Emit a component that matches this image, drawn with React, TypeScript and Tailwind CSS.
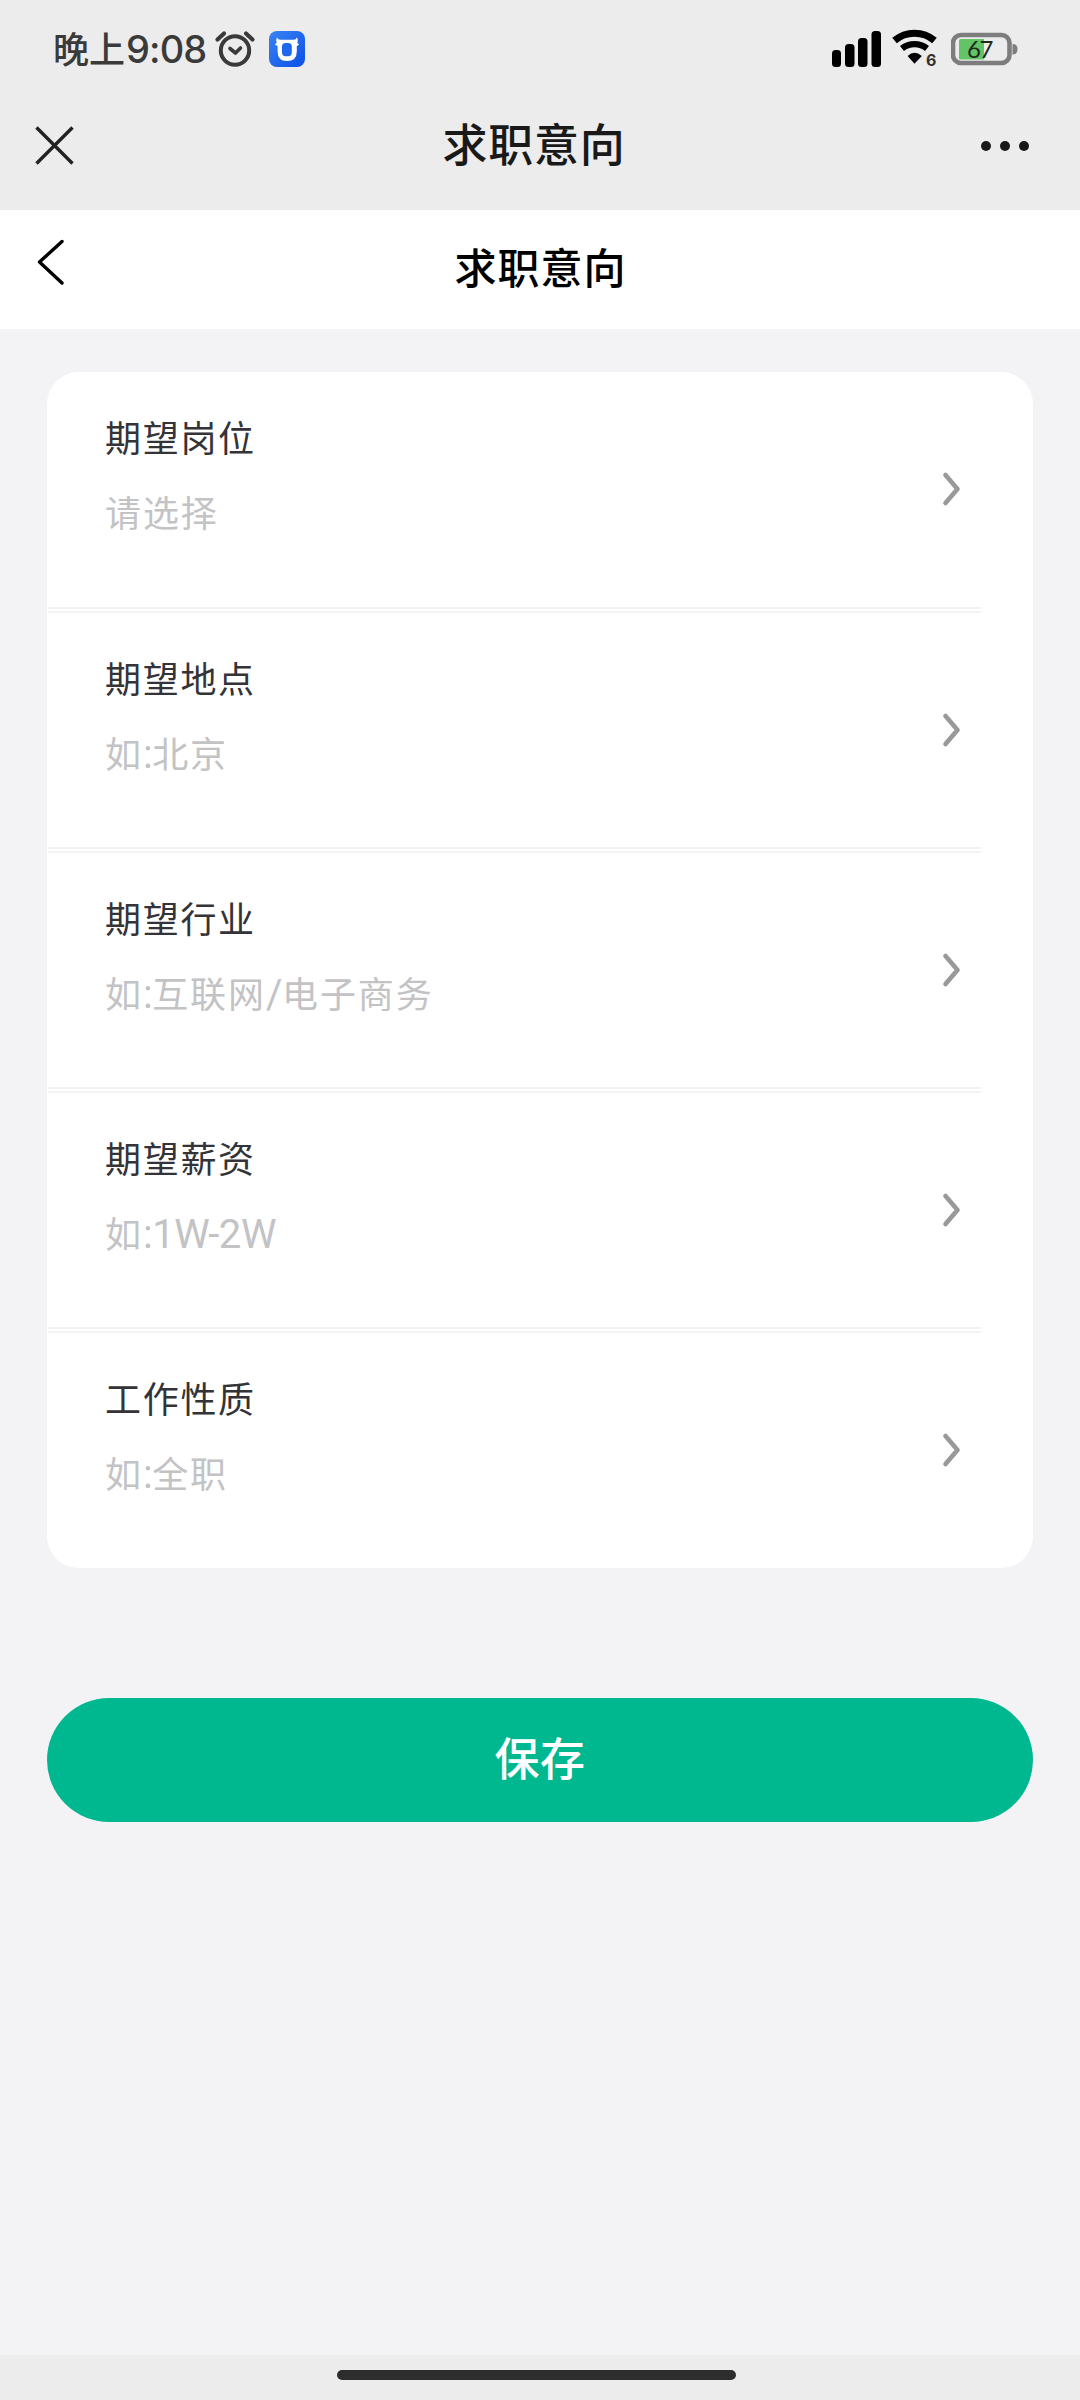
const cjk = 'font-["Noto_Sans_CJK_SC",sans-serif]';

type Part = { text: string; latin?: boolean };
type Field = { label: string; hint: Part[]; height: string };

const fields: Field[] = [
  { label: '期望岗位', hint: [{ text: '请选择' }], height: 'h-[241px]' },
  { label: '期望地点', hint: [{ text: '如' }, { text: ':', latin: true }, { text: '北京' }], height: 'h-[240px]' },
  {
    label: '期望行业',
    hint: [{ text: '如' }, { text: ':', latin: true }, { text: '互联网' }, { text: '/', latin: true }, { text: '电子商务' }],
    height: 'h-[240px]',
  },
  { label: '期望薪资', hint: [{ text: '如' }, { text: ':1W-2W', latin: true }], height: 'h-[240px]' },
  { label: '工作性质', hint: [{ text: '如' }, { text: ':', latin: true }, { text: '全职' }], height: 'h-[235px]' },
];

function AlarmIcon() {
  return (
    <svg className="ml-[8px] h-[40px] w-[42px]" viewBox="0 0 42 40" fill="none" stroke="#3a3a3a" strokeLinecap="round">
      <circle cx="21" cy="21.5" r="14.2" strokeWidth="4" />
      <path d="M3.500 10.500 L10 4.500 M32 4.500 L38.500 10.500" strokeWidth="4.200" />
      <path d="M16 19.500 L21.500 24 L26.500 19" strokeWidth="3.600" strokeLinejoin="round" />
    </svg>
  );
}

function BullIcon() {
  return (
    <svg className="ml-[13px] h-9 w-9" viewBox="0 0 36 36">
      <defs>
        <linearGradient id="bull" x1="0" y1="0" x2="1" y2="1">
          <stop offset="0" stopColor="#3a83f4" />
          <stop offset="1" stopColor="#0b50e6" />
        </linearGradient>
      </defs>
      <rect width="36" height="36" rx="8" fill="url(#bull)" />
      <path
        d="M8 6.2 Q8.800 9 12 8.800 H24 Q27.200 9 28 6.200 Q29.600 9.500 28.400 12 L30.200 13.400 L27.800 15 V20.500 Q27.800 30 18 30 Q8.600 30 8.600 20.500 V15 L5.800 13.400 L7.600 12 Q6.400 9.500 8 6.200 Z"
        fill="#fff"
      />
      <rect x="13" y="12" width="9.800" height="13.200" rx="3.600" fill="#1f68ee" />
    </svg>
  );
}

function StatusBar() {
  return (
    <div className="flex h-[97px] items-start justify-between pl-[53px] pr-[63px]">
      <div className="flex pt-[29px]">
        <div className="flex h-10 items-center whitespace-nowrap text-[#3a3a3a]">
          <span className={`${cjk} mb-[4px] w-[73px] text-[36px] leading-[40px] font-medium`}>晚上</span>
          <span className="w-[80px] font-[Inter,sans-serif] text-[38px] leading-[40px] font-medium tracking-[-0.900px]">9:08</span>
        </div>
        <AlarmIcon />
        <div className="pt-[2px]">
          <BullIcon />
        </div>
      </div>
      <div className="flex pt-[27px]">
        <svg className="h-[42px] w-[52px]" viewBox="0 0 52 42">
          <rect x="1" y="23" width="9" height="17" rx="3.5" />
          <rect x="14" y="17" width="9.5" height="23" rx="3.5" />
          <rect x="27" y="11" width="9.5" height="29" rx="3.5" />
          <rect x="40.5" y="4" width="9.5" height="36" rx="3.5" />
        </svg>
        <div className="relative ml-[8px] h-[42px] w-[52px]">
          <svg className="h-[42px] w-[52px]" viewBox="0 0 52 42" fill="none" stroke="#000">
            <path d="M3.5 15 A31 31 0 0 1 43.5 15" strokeWidth="7" transform="translate(0 -1.5)" />
            <path d="M11 22.5 A20 20 0 0 1 36 22.5" strokeWidth="6.4" transform="translate(0 -1)" />
            <path d="M16.6 29 Q23.5 22.4 30.8 29 L23.5 36.8 Z" fill="#000" stroke="none" />
          </svg>
          <span className="absolute top-[25px] left-[35px] font-[Inter,sans-serif] text-[16px] leading-[17px] font-bold text-[#333]">6</span>
        </div>
        <div className="relative ml-[8px] h-[42px] w-[66px]">
          <svg className="h-[42px] w-[67px]" viewBox="0 0 67 42">
            <rect x="2" y="8" width="56.5" height="28" rx="8" fill="none" stroke="#7d7d7d" strokeWidth="4.6" />
            <path d="M9.5 12 H33 V32.5 H9.5 Q8 32.5 8 31 V13.500 Q8 12 9.500 12 Z" fill="#62c466" />
            <path d="M61.500 17 Q66.500 17 66.500 22 Q66.500 27.500 61.500 27.500 Z" fill="#7d7d7d" />
          </svg>
          <span className="absolute top-[10px] left-[16px] font-[Lato,sans-serif] text-[24px] leading-[24px] tracking-[-1.400px] text-[#1c2b1c]">67</span>
        </div>
      </div>
    </div>
  );
}

function TitleBar() {
  return (
    <div className="flex h-[113px] items-start justify-between pr-[51px] pl-[35px]">
      <svg className="mt-[29px] h-[39px] w-[39px]" viewBox="0 0 39 39" stroke="#222" strokeWidth="3.4">
        <path d="M1.500 1.500 L37.500 37.500 M37.500 1.500 L1.500 37.500" />
      </svg>
      <h1 className={`${cjk} mt-[16px] ml-[13px] text-[45px] leading-[60px] font-medium tracking-[0.700px] text-[#191919]`}>求职意向</h1>
      <div className="mt-[43.500px] flex gap-[9px]">
        <span className="size-[10px] rounded-full bg-[#191919]" />
        <span className="size-[10px] rounded-full bg-[#191919]" />
        <span className="size-[10px] rounded-full bg-[#191919]" />
      </div>
    </div>
  );
}

function PageHeader() {
  return (
    <header className="flex h-[119px] items-start justify-between bg-white px-[36px]">
      <svg className="mt-[28px] h-[48px] w-[30px]" viewBox="0 0 30 48" fill="none" stroke="#000" strokeWidth="3.400" strokeLinecap="round" strokeLinejoin="round">
        <path d="M26 3.500 L3.500 24 L26 45" />
      </svg>
      <h2 className={`${cjk} mt-[26px] ml-px text-[42px] leading-[60px] font-medium tracking-[1px] text-black`}>求职意向</h2>
      <span className="w-[30px]" />
    </header>
  );
}

function FieldRow({ field, last }: { field: Field; last: boolean }) {
  return (
    <div className={`flex flex-col ${field.height}`}>
      <div className="flex flex-1 justify-between pr-[72px] pl-[58px]">
        <div className="flex flex-col pt-[39px]">
          <span className={`${cjk} text-[36px] leading-[50px] tracking-[1.700px] text-[#333338]`}>{field.label}</span>
          <span className={`${cjk} mt-[25px] text-[36px] leading-[50px] tracking-[1.900px] text-[#c3c3c5]`}>
            {field.hint.map((p, i) => (
              <span key={i} className={p.latin ? 'font-[Roboto,sans-serif] text-[40px] tracking-[-0.400px]' : ''}>
                {p.text}
              </span>
            ))}
          </span>
        </div>
        <svg className="mt-[99px] h-[36px] w-[20px]" viewBox="0 0 20 36" fill="none" stroke="#999" strokeWidth="4.600" strokeLinecap="round" strokeLinejoin="round">
          <path d="M4.500 4 L16.500 18 L4.500 32" />
        </svg>
      </div>
      {!last && <div className="mr-[52px] ml-px h-[6px] border-y-2 border-[#f2f2f3]" />}
    </div>
  );
}

export default function App() {
  return (
    <div className="flex h-[2400px] w-[1080px] flex-col overflow-hidden bg-[#f3f3f6]">
      <div className="bg-[#ececec]">
        <StatusBar />
        <TitleBar />
      </div>
      <PageHeader />
      <main className="flex flex-1 flex-col px-[47px] pt-[43px]">
        <section className="rounded-[32px] bg-white">
          {fields.map((f, i) => (
            <FieldRow key={f.label} field={f} last={i === fields.length - 1} />
          ))}
        </section>
        <button className={`${cjk} mt-[130px] flex h-[124px] justify-center rounded-full bg-[#00b890] pt-[29px] text-[45px] leading-[60px] font-medium tracking-[0.500px] text-white`}>
          保存
        </button>
      </main>
      <div className="flex h-[45px] justify-center bg-[#ececec] pt-[15px] pr-[7px]">
        <div className="h-[10px] w-[399px] rounded-full bg-[#2d2d2d]" />
      </div>
    </div>
  );
}
